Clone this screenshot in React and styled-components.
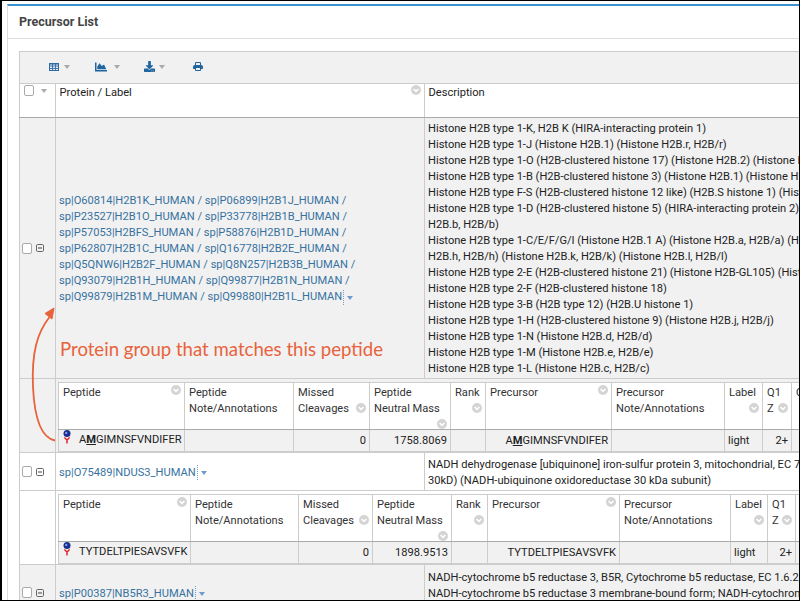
import React from "react";
import styled, { createGlobalStyle } from "styled-components";
import { FaChartArea, FaDownload } from "react-icons/fa";

const Global = createGlobalStyle`
  html, body { margin: 0; padding: 0; background: #fff; }
  * { box-sizing: border-box; }
`;

const Frame = styled.div`
  position: relative; width: 800px; height: 601px; overflow: hidden; background: #fff;
  border-style: solid; border-color: #000; border-width: 1px 1px 1px 2px;
  padding: 3px 0 0 5px;
  font: 11.12px/16px Roboto, "Liberation Sans", sans-serif; color: #222;
`;
const Panel = styled.section`
  border-top: 2px solid #3a93cf; border-left: 1px solid #ddd; height: 700px; overflow: hidden;
`;
const PanelHead = styled.h2`
  margin: 0; height: 33px; padding: 0 0 0 11px; display: flex; align-items: center;
  border-bottom: 1px solid #ddd; font-size: 12.5px; font-weight: 700; color: #444;
`;
const PanelBody = styled.div`
  padding: 12px 0 0 11px; width: 1500px;
`;
const Toolbar = styled.div`
  height: 32px; display: flex; align-items: center; padding: 0 0 2px 29px; gap: 25px;
  background: #f1f1f1; border: 1px solid #ccc; border-bottom: none; width: 1407px;
`;
const ToolButton = styled.span`
  display: inline-flex; align-items: center; gap: ${(p) => p.$gap}px; color: #1f659f;
  margin-left: ${(p) => p.$push || 0}px;
`;
const Caret = styled.i`
  display: inline-block; width: 0; height: 0; border-style: solid; border-width: 4px 3.5px 0;
  border-color: ${(p) => p.$color || "#aaa"} transparent transparent;
`;
const Grid = styled.table`
  border-collapse: collapse; table-layout: fixed; width: 1407px;
`;
const Col = styled.col`
  width: ${(p) => p.$w}px;
`;
const HeadCell = styled.th`
  position: relative; height: 34px; padding: 1px 4px 1px 3.5px; vertical-align: top; text-align: left;
  font-weight: 400; background: #fff; border: 1px solid #ccc; border-bottom-color: #aaa;
`;
const Row = styled.tr`
  background: ${(p) => (p.$shaded ? "#f1f1f1" : "#fff")};
  height: ${(p) => p.$h}px;
`;
const SelectCell = styled.td`
  border: 1px solid #ccc; padding: 0 0 0 2px; vertical-align: middle;
`;
const SelectInner = styled.div`
  display: flex; align-items: center; gap: ${(p) => p.$gap || 4}px;
`;
const Check = styled.input.attrs({ type: "checkbox" })`
  appearance: none; margin: 0; width: 10px; height: 11px; border: 1px solid #aaa; border-radius: 2px; background: #fff;
`;
const Body = styled.td`
  border: 1px solid #ccc; padding: 3px 3px 1px; vertical-align: middle; white-space: nowrap; overflow: hidden;
`;
const DetailBody = styled.td`
  border: 1px solid #ccc; padding: 3px 0 0 2px; vertical-align: top; overflow: hidden;
`;
const Line = styled.div`
  white-space: nowrap;
`;
const ProteinLink = styled.a`
  color: #37729f; text-decoration: none;
`;
const MenuMark = styled.span`
  display: inline-block; height: 15px; margin-left: 1px; padding-left: 3px; vertical-align: middle;
  border-left: 1px dotted #7a9cc0; line-height: 13px;
`;
const Inner = styled.table`
  border-collapse: collapse; table-layout: fixed; width: ${(p) => p.$w}px;
`;
const InnerHead = styled.th`
  height: 46px; padding: 2px 4px 0; vertical-align: top; text-align: left; font-weight: 400;
  background: #fff; border: 1px solid #ccc; border-bottom-color: #aaa; color: #333;
`;
const InnerCell = styled.td`
  height: 22px; padding: 0 3px; white-space: nowrap; overflow: hidden; background: #f1f1f1;
  border: 1px solid #ccc; text-align: ${(p) => p.$align || "left"}; color: #222;
`;
const Seq = styled.span`
  display: inline-flex; align-items: center; gap: 8px; margin-left: 1px;
`;
const SeqMark = styled.svg`
  margin-top: -5px; flex: none;
`;
const Mod = styled.b`
  text-decoration: underline; font-weight: 700;
`;
const Sort = styled.svg`
  float: right; margin: ${(p) => p.$top ?? 0}px ${(p) => p.$right ?? -1}px 0 0;
`;
const Callout = styled.div`
  position: absolute; left: 58px; top: 336px; color: #e8623a;
  font: 18.6px/24px Lato, sans-serif; white-space: nowrap;
`;
const ArrowArt = styled.svg`
  position: absolute; left: 0; top: 0; pointer-events: none;
`;

const SortMark = ({ top, right }) => (
  <Sort $top={top} $right={right} width="10" height="10" viewBox="0 0 10 10">
    <circle cx="5" cy="5" r="5" fill="#d4d4d4" />
    <path d="M2.6 4 5 6.4 7.4 4" fill="none" stroke="#fff" strokeWidth="1.5" />
  </Sort>
);

const TableIcon = () => (
  <svg width="10" height="8" viewBox="0 0 10 8" fill="none" stroke="#2f6aa3" strokeWidth="1">
    <rect x=".5" y=".5" width="9" height="7" fill="#dfe8f2" />
    <path d="M3.5 0v8M6.5 0v8M0 3h10M0 5.5h10" strokeOpacity=".85" />
    <path d="M0 .8h10" strokeWidth="1.4" />
  </svg>
);

const PrintIcon = () => (
  <svg width="10" height="9" viewBox="0 0 10 9" fill="none" stroke="#1f659f" strokeWidth="1">
    <path d="M2.5 3.5V.5h5v3" />
    <path d="M1.5 3.5h7a1 1 0 0 1 1 1v2h-9v-2a1 1 0 0 1 1-1Z" fill="#1f659f" />
    <path d="M2.5 6v2.5h5V6" fill="#f1f1f1" />
  </svg>
);

const PeptideMark = () => (
  <SeqMark width="8" height="14" viewBox="0 0 8 14">
    <circle cx="4" cy="3.6" r="3.5" fill="#1a2f8f" />
    <circle cx="3.2" cy="2.9" r="1.2" fill="#7f9be0" />
    <path d="M1.4 7.6 4 10 6.6 7.6M4 10v3.6" fill="none" stroke="#d8202a" strokeWidth="1.4" />
  </SeqMark>
);

const MinusBox = () => (
  <svg width="8" height="8" viewBox="0 0 8 8">
    <rect x=".5" y=".5" width="7" height="7" rx="1.2" fill="none" stroke="#666" />
    <path d="M2 4h4" stroke="#444" />
  </svg>
);

const PepHead = ({ lines, markBefore, top, noMark }) => (
  <InnerHead>
    {lines.map((l, i) => (
      <React.Fragment key={i}>
        {!noMark && markBefore === i && <SortMark top={top} />}
        <Line>{l}</Line>
      </React.Fragment>
    ))}
    {!noMark && markBefore === lines.length && <SortMark top={top} />}
  </InnerHead>
);

const Sequence = ({ seq }) =>
  seq === "AMGIMNSFVNDIFER" ? (
    <>A<Mod>M</Mod>GIMNSFVNDIFER</>
  ) : (
    seq
  );

const PeptideTable = ({ widths, seq, mass, mz }) => (
  <Inner $w={widths.reduce((a, b) => a + b, 0)}>
    <colgroup>
      {widths.map((w, i) => (
        <Col key={i} $w={w} />
      ))}
    </colgroup>
    <thead>
      <tr>
        <PepHead lines={["Peptide"]} markBefore={0} />
        <PepHead lines={["Peptide", "Note/Annotations"]} noMark />
        <PepHead lines={["Missed", "Cleavages"]} markBefore={1} top={2} />
        <PepHead lines={["Peptide", "Neutral Mass"]} markBefore={2} top={2} />
        <PepHead lines={["Rank"]} markBefore={1} top={2} />
        <PepHead lines={["Precursor"]} markBefore={0} />
        <PepHead lines={["Precursor", "Note/Annotations"]} noMark />
        <PepHead lines={["Label"]} markBefore={1} top={2} />
        <PepHead lines={["Q1", "Z"]} markBefore={1} top={2} />
        <PepHead lines={["Q1 m/z"]} noMark />
      </tr>
    </thead>
    <tbody>
      <tr>
        <InnerCell>
          <Seq>
            <PeptideMark />
            <span><Sequence seq={seq} /></span>
          </Seq>
        </InnerCell>
        <InnerCell />
        <InnerCell $align="right">0</InnerCell>
        <InnerCell $align="right">{mass}</InnerCell>
        <InnerCell />
        <InnerCell $align="right"><Sequence seq={seq} /></InnerCell>
        <InnerCell />
        <InnerCell>light</InnerCell>
        <InnerCell $align="right">2+</InnerCell>
        <InnerCell $align="right">{mz}</InnerCell>
      </tr>
    </tbody>
  </Inner>
);

const histoneProteins = [
  "sp|O60814|H2B1K_HUMAN / sp|P06899|H2B1J_HUMAN /",
  "sp|P23527|H2B1O_HUMAN / sp|P33778|H2B1B_HUMAN /",
  "sp|P57053|H2BFS_HUMAN / sp|P58876|H2B1D_HUMAN /",
  "sp|P62807|H2B1C_HUMAN / sp|Q16778|H2B2E_HUMAN /",
  "sp|Q5QNW6|H2B2F_HUMAN / sp|Q8N257|H2B3B_HUMAN /",
  "sp|Q93079|H2B1H_HUMAN / sp|Q99877|H2B1N_HUMAN /",
];

const histoneDescription = [
  "Histone H2B type 1-K, H2B K (HIRA-interacting protein 1)",
  "Histone H2B type 1-J (Histone H2B.1) (Histone H2B.r, H2B/r)",
  "Histone H2B type 1-O (H2B-clustered histone 17) (Histone H2B.2) (Histone H2B.n, H2B/n)",
  "Histone H2B type 1-B (H2B-clustered histone 3) (Histone H2B.1) (Histone H2B.f, H2B/f)",
  "Histone H2B type F-S (H2B-clustered histone 12 like) (H2B.S histone 1) (Histone H2B.s, H2B/s)",
  "Histone H2B type 1-D (H2B-clustered histone 5) (HIRA-interacting protein 2) (Histone H2B.1 B)",
  "H2B.b, H2B/b)",
  "Histone H2B type 1-C/E/F/G/I (Histone H2B.1 A) (Histone H2B.a, H2B/a) (Histone H2B.g, H2B/g)",
  "H2B.h, H2B/h) (Histone H2B.k, H2B/k) (Histone H2B.l, H2B/l)",
  "Histone H2B type 2-E (H2B-clustered histone 21) (Histone H2B-GL105) (Histone H2B.q, H2B/q)",
  "Histone H2B type 2-F (H2B-clustered histone 18)",
  "Histone H2B type 3-B (H2B type 12) (H2B.U histone 1)",
  "Histone H2B type 1-H (H2B-clustered histone 9) (Histone H2B.j, H2B/j)",
  "Histone H2B type 1-N (Histone H2B.d, H2B/d)",
  "Histone H2B type 1-M (Histone H2B.e, H2B/e)",
  "Histone H2B type 1-L (Histone H2B.c, H2B/c)",
];

const ProteinRow = ({ shaded, h, links, tail, description }) => (
  <Row $shaded={shaded} $h={h}>
    <SelectCell>
      <SelectInner>
        <Check />
        <MinusBox />
      </SelectInner>
    </SelectCell>
    <Body>
      {links.map((l) => (
        <Line key={l}><ProteinLink>{l}</ProteinLink></Line>
      ))}
      <Line>
        <ProteinLink>{tail}</ProteinLink>
        <MenuMark><Caret $color="#6f9bd0" /></MenuMark>
      </Line>
    </Body>
    <Body>
      {description.map((d) => (
        <Line key={d}>{d}</Line>
      ))}
    </Body>
  </Row>
);

const DetailRow = ({ shaded, h, children }) => (
  <Row $shaded={shaded} $h={h}>
    <SelectCell />
    <DetailBody colSpan={2}>{children}</DetailBody>
  </Row>
);

export default function App() {
  return (
    <>
      <Global />
      <Frame>
        <Panel>
          <PanelHead>Precursor List</PanelHead>
          <PanelBody>
            <Toolbar>
              <ToolButton $gap={5}><TableIcon /><Caret /></ToolButton>
              <ToolButton $gap={7}><FaChartArea size={12} /><Caret /></ToolButton>
              <ToolButton $gap={4} $push={-1}><FaDownload size={11} /><Caret /></ToolButton>
              <ToolButton $gap={0} $push={3}><PrintIcon /></ToolButton>
            </Toolbar>
            <Grid>
              <colgroup>
                <Col $w={36} />
                <Col $w={369} />
                <Col $w={1002} />
              </colgroup>
              <thead>
                <tr>
                  <HeadCell>
                    <SelectInner $gap={7.5}>
                      <Check />
                      <Caret />
                    </SelectInner>
                  </HeadCell>
                  <HeadCell>
                    <SortMark top={0} />
                    Protein / Label
                  </HeadCell>
                  <HeadCell>Description</HeadCell>
                </tr>
              </thead>
              <tbody>
                <ProteinRow shaded h={261} links={histoneProteins} tail="sp|Q99879|H2B1M_HUMAN / sp|Q99880|H2B1L_HUMAN" description={histoneDescription} />
                <DetailRow shaded h={74}>
                  <PeptideTable widths={[126, 109, 76, 81, 35, 126, 113, 38, 29, 80]} seq="AMGIMNSFVNDIFER" mass="1758.8069" mz="880.4107" />
                </DetailRow>
                <ProteinRow h={38} links={[]} tail="sp|O75489|NDUS3_HUMAN" description={[
                  "NADH dehydrogenase [ubiquinone] iron-sulfur protein 3, mitochondrial, EC 7.1.1.2 (Complex I-",
                  "30kD) (NADH-ubiquinone oxidoreductase 30 kDa subunit)",
                ]} />
                <DetailRow h={74}>
                  <PeptideTable widths={[132, 108, 74, 79, 36, 132, 111, 37, 28, 80]} seq="TYTDELTPIESAVSVFK" mass="1898.9513" mz="950.4830" />
                </DetailRow>
                <ProteinRow shaded h={56} links={[]} tail="sp|P00387|NB5R3_HUMAN" description={[
                  "NADH-cytochrome b5 reductase 3, B5R, Cytochrome b5 reductase, EC 1.6.2.2 (Diaphorase-1)",
                  "NADH-cytochrome b5 reductase 3 membrane-bound form; NADH-cytochrome b5 reductase 3",
                  "soluble form",
                ]} />
              </tbody>
            </Grid>
          </PanelBody>
        </Panel>
        <Callout>Protein group that matches this peptide</Callout>
        <ArrowArt width="120" height="460" viewBox="0 0 120 460" fill="none">
          <path d="M53 439.5C40 437 32.5 418 31 386 29.5 352 35 332 47.5 316" stroke="#e8623a" strokeWidth="1.8" />
          <path d="M52 307 43 312.5 50 318Z" fill="#e8623a" stroke="#e8623a" />
        </ArrowArt>
      </Frame>
    </>
  );
}
